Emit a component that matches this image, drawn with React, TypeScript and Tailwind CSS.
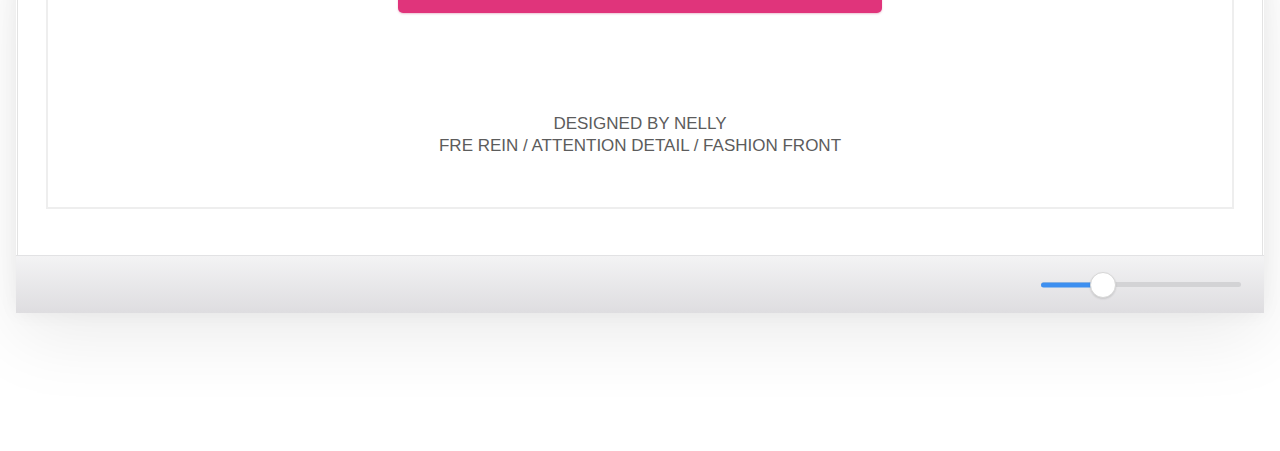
import React from 'react';

function Slider({ value }: { value: number }) {
  return (
    <div className="relative h-[26px] w-[200px] flex items-center">
      <div className="h-[5px] w-full rounded-full bg-[#d3d3d5]" />
      <div
        className="absolute left-0 top-1/2 -translate-y-1/2 h-[5px] rounded-full bg-[#3d8ff0]"
        style={{ width: `${value}%` }}
      />
      <div
        className="absolute top-1/2 -translate-y-1/2 -translate-x-1/2 h-[26px] w-[26px] rounded-full bg-white border border-[#d6d6d6] shadow-[0_1px_2px_rgba(0,0,0,0.12)]"
        style={{ left: `${value}%` }}
      />
    </div>
  );
}

export default function App() {
  return (
    <div className="h-[451px] w-full overflow-hidden bg-white font-['Liberation_Sans',Arial,sans-serif]">
      <div className="mx-[16px] -mt-[60px] shadow-[0_24px_70px_rgba(0,0,0,0.08),0_0_18px_rgba(0,0,0,0.05)]">
        {/* window body */}
        <div className="bg-white border-x border-[#e3e3e3] mx-[1px] px-[28px] pb-[46px]">
          <div className="border-2 border-t-0 border-[#eeeeee] flex flex-col items-center">
            <div className="h-[73px] w-[484px] rounded-[5px] bg-[#e0347b] shadow-[0_1px_2px_rgba(180,20,80,0.25)]" />
            <div className="mt-[100px] mb-[50px] text-center text-[17px] leading-[22px] text-[#5c5c5c]">
              <p>DESIGNED BY NELLY</p>
              <p>FRE REIN / ATTENTION DETAIL / FASHION FRONT</p>
            </div>
          </div>
        </div>
        {/* toolbar */}
        <div className="h-[58px] border-t border-[#e2e2e4] bg-gradient-to-b from-[#f3f3f4] to-[#dedde0] flex items-center justify-end pr-[23px]">
          <Slider value={31} />
        </div>
      </div>
    </div>
  );
}
